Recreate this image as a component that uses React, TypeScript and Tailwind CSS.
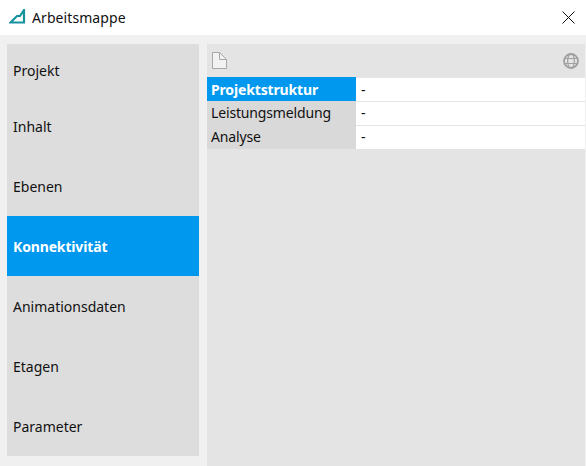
const font = { fontFamily: '"Noto Sans", sans-serif' };

const items = [
  { label: "Projekt", h: "h-[52px]" },
  { label: "Inhalt", h: "h-[60px]" },
  { label: "Ebenen", h: "h-[60px]" },
  { label: "Konnektivität", h: "h-[60px]", active: true },
  { label: "Animationsdaten", h: "h-[60px]" },
  { label: "Etagen", h: "h-[60px]" },
  { label: "Parameter", h: "h-[60px]" },
];

const rows = [
  { label: "Projektstruktur", active: true },
  { label: "Leistungsmeldung" },
  { label: "Analyse" },
];

export default function App() {
  return (
    <div style={font} className="w-[586px] h-[466px] bg-[#f0f0f0] flex flex-col overflow-hidden text-[14px] text-[#111]">
      <div className="h-[35px] bg-white flex items-center pl-[9px] pr-[11px] shrink-0">
        <svg width="18" height="18" viewBox="0 0 18 18" fill="none" stroke="#14939f" strokeWidth="2.2" className="mr-[5px]">
          <path d="M1.5 13.5 L8 7 H11 L15 1 V13.5 Z" />
        </svg>
        <span className="text-[14px] flex-1 tracking-[0.08px]">Arbeitsmappe</span>
        <svg width="13" height="13" viewBox="0 0 13 13" stroke="#111" strokeWidth="1" fill="none">
          <path d="M0.5 0.5 L12.5 12.5 M12.5 0.5 L0.5 12.5" />
        </svg>
      </div>
      <div className="flex flex-1 pt-[9px] pl-[7px]">
        <div className="w-[192px] h-[412px] bg-[#dddddd] flex flex-col shrink-0">
          {items.map((it) => (
            <div
              key={it.label}
              className={`${it.h} flex items-center pl-[6px] ${it.active ? "bg-[#0097ee] text-white font-bold tracking-[-0.15px]" : ""} ${it.label === "Projekt" ? "pt-[1px]" : ""}`}
            >
              {it.label}
            </div>
          ))}
        </div>
        <div className="ml-[8px] w-[378px] bg-[#e4e4e4] flex flex-col">
          <div className="h-[33px] flex items-center justify-between pl-[5px] pr-[6px] shrink-0">
            <svg width="15" height="17" viewBox="0 0 15 17" fill="#f2f2f2" stroke="#a8a8a8" strokeWidth="1">
              <path d="M0.5 0.5 H7.5 L14.5 7.5 V16.5 H0.5 Z" />
              <path d="M7.5 0.5 V7.5 H14.5" fill="none" />
            </svg>
            <svg width="16" height="16" viewBox="0 0 16 16" fill="none" stroke="#a0a0a0" strokeWidth="1.2">
              <circle cx="8" cy="8" r="7" strokeWidth="1.8" />
              <ellipse cx="8" cy="8" rx="3.4" ry="7" />
              <path d="M1.5 5.5 H14.5 M1.5 10.5 H14.5" />
            </svg>
          </div>
          {rows.map((r) => (
            <div key={r.label} className="h-[24px] flex shrink-0">
              <div className={`w-[149px] flex items-center pl-[4px] tracking-[-0.15px] ${r.active ? "bg-[#0097ee] text-white font-bold" : "bg-[#d9d9d9] pb-[2px]"}`}>
                {r.label}
              </div>
              <div className={`flex-1 bg-white border-t border-[#e4e4e4] flex items-center pl-[5px] ${r.active ? "" : "pb-[2px]"}`}>-</div>
            </div>
          ))}
        </div>
      </div>
    </div>
  );
}
